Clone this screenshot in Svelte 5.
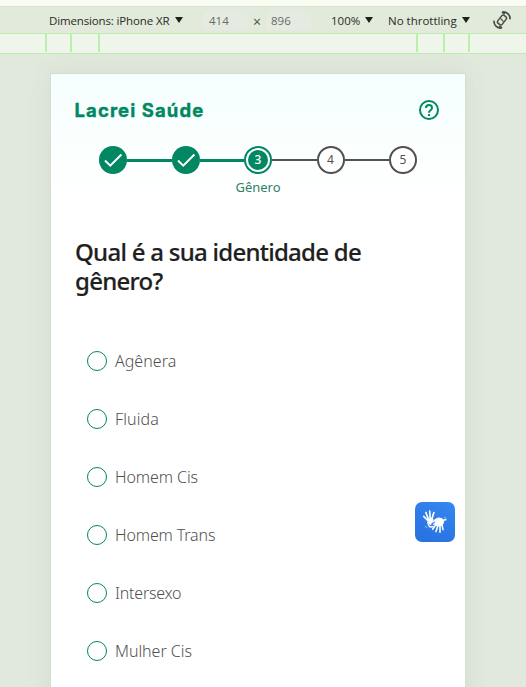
<script>
  const options = [
    { label: 'Agênera', spacing: 0.03 },
    { label: 'Fluida', spacing: 0.1 },
    { label: 'Homem Cis', spacing: -0.1 },
    { label: 'Homem Trans', spacing: -0.15 },
    { label: 'Intersexo', spacing: -0.22 },
    { label: 'Mulher Cis', spacing: -0.04 }
  ];
  const steps = [1, 2, 3, 4, 5];
  const current = 3;
  let selected = $state('');
</script>

<div class="screen">
  <div class="strip"></div>
  <header class="toolbar">
    <span class="device">Dimensions: iPhone XR</span><i class="caret"></i>
    <span class="size first">414</span><span class="times">×</span><span class="size second">896</span>
    <span class="zoom">100%</span><i class="caret"></i>
    <span class="throttle">No throttling</span><i class="caret"></i>
    <svg class="rotate" width="20" height="20" viewBox="0 0 20 20" fill="none" stroke="#494e47" stroke-width="1.7">
      <rect x="7.2" y="5" width="5.6" height="10" rx="2" stroke-width="1.5" transform="rotate(38 10 10)" />
      <path d="M8.5 8.4l3 3.2" stroke-width="1.2" />
      <path d="M10.5 1.9C14.8 1.6 18.6 5 17.9 9.4M9.5 18.1C5.2 18.4 1.4 15 2.1 10.6" />
      <path d="M10 2l2.8 2.2M10 18l-2.8-2.2" />
    </svg>
  </header>
  <div class="ruler">
    <b class="a"></b><b class="b"></b><b class="c"></b><b class="d"></b><b class="e"></b><b class="f"></b>
  </div>
  <main class="canvas">
    <section class="phone">
      <div class="brand">
        <span class="logo">Lacrei Saúde</span>
        <svg class="help" width="20" height="20" viewBox="0 0 20 20" fill="none" stroke="#018762" stroke-width="2">
          <circle cx="10" cy="10" r="9" />
          <path d="M7 8c0-4 6-4 6 0 0 2.3-3 2.3-3 4.7M10 14v2" />
        </svg>
      </div>
      <div class="steps">
        {#each steps as step}
          {#if step > 1}<i class="line" class:complete={step <= current}></i>{/if}
          <div class="step" class:done={step < current} class:active={step === current}>
            {#if step < current}
              <svg width="28" height="28" viewBox="0 0 28 28" fill="none" stroke="#fff" stroke-width="2">
                <path d="M6 14.5l5.3 5.2L22.4 8.5" />
              </svg>
            {:else}
              <span>{step}</span>
            {/if}
          </div>
        {/each}
      </div>
      <div class="caption">Gênero</div>
      <h1>Qual é a sua identidade de gênero?</h1>
      <div class="options">
        {#each options as { label, spacing }}
          <label>
            <input type="radio" name="genero" value={label} bind:group={selected} />
            <span style="letter-spacing: {spacing}px">{label}</span>
          </label>
        {/each}
      </div>
      <button class="libras" aria-label="Libras">
        <svg width="40" height="40" viewBox="0 0 40 40" fill="none" stroke="#fff" stroke-linecap="round" stroke-linejoin="round">
          <path d="M12.8 18l4.2-1.4 1.4 1.2-2.2 2.4-.4 2.6-1.8-1.4z" fill="#fff" stroke-width="1" />
          <path d="M12.8 18.5l-4.1-4.2M13.5 17.5l-2.6-7M15.2 17l-.5-7.8M16.8 17l2.1-6.4" stroke-width="1.7" />
          <path d="M13 20.5c.2 3.6 2 5.2 5 4" stroke-width="1.5" />
          <path d="M20.4 17.3l3-1.4 3.7.7 1.6 2.3-.8 3.4-3 1.8-3.7-.4-.8-2z" fill="#fff" stroke-width="1" />
          <path d="M21 22.5l-3.4 4.7M23 23.3l-2 6.3M25 23.3v6.9M26.8 21.8l1.2 5.9M28 18.2l2.8-.4" stroke-width="1.6" />
          <path d="M16.6 20.6l4.4-3.1M18.6 22.4l2.6-1.6" stroke-width="1.3" />
          <path d="M10.3 24.5l1.7 1.1M29.5 15.4l1.5.8" stroke-width=".8" opacity=".7" />
        </svg>
      </button>
    </section>
  </main>
</div>

<style>
  :global(body) { margin: 0; overflow: hidden; }
  * { box-sizing: border-box; }
  .screen { width: 526px; height: 687px; overflow: hidden; display: flex; flex-direction: column; background: #e1e9dc; }
  .strip { height: 6px; flex: none; background: #f8fcf2; }
  .toolbar {
    height: 27px; flex: none; display: flex; align-items: center; padding: 2px 0 0 49px;
    background: #e2eadb; border-top: 1px solid #dae2d4;
    font: 11.5px/16px "Open Sans", sans-serif; color: #272c26; white-space: nowrap;
  }
  .device { width: 122px; letter-spacing: -0.14px; }
  .zoom { width: 29px; margin-left: 20px; }
  .throttle { width: 69px; margin-left: 15px; }
  .caret { width: 8px; height: 6px; margin: -2px 0 0 4px; background: #1d211c; clip-path: polygon(0 0, 100% 0, 50% 100%); }
  .zoom + .caret, .throttle + .caret { margin-left: 5px; }
  .size { width: 45px; height: 18px; line-height: 18px; padding-left: 6px; border-radius: 4px; background: #e6ebe2; color: #676b66; }
  .first { margin-left: 20px; }
  .second { padding-left: 5px; }
  .times { width: 18px; text-align: center; padding-top: 1px; font-size: 14px; color: #4a4e48; }
  .rotate { margin: -2px 0 0 22px; flex: none; }
  .ruler { height: 21px; flex: none; display: flex; background: #f0f5eb; border-top: 1px solid #b9efaa; border-bottom: 1px solid #b9efaa; }
  .ruler b { width: 2px; height: 18px; background: #b9f0aa; }
  .a { margin-left: 45px; }
  .b { margin-left: 23px; }
  .c { margin-left: 26px; }
  .d { margin-left: 316px; }
  .e { margin-left: 25px; }
  .f { margin-left: 23px; }
  .canvas { flex: 1; padding: 19px 0 0 50px; }
  .phone {
    position: relative; width: 416px; height: 640px; padding: 0 24px; border: 1px solid #d5ded2;
    background: linear-gradient(#f4fffd, #fff 122px); box-shadow: 0 0 24px rgba(70, 90, 65, .08);
    font-family: "Noto Sans", sans-serif;
  }
  .brand { height: 72px; display: flex; align-items: center; justify-content: space-between; padding: 0 2px 0 0; }
  .logo { margin-left: -.5px; font: 700 18.5px/24px Inter, "Noto Sans", sans-serif; color: #018762; letter-spacing: 1.1px; -webkit-text-stroke: .4px #018762; }
  .steps { display: flex; align-items: center; height: 28px; padding: 0 24px; }
  .step {
    width: 28px; height: 28px; flex: none; display: flex; align-items: center; justify-content: center;
    border: 2px solid #515151; border-radius: 50%; background: #fff; color: #515151; font-size: 12px; line-height: 20px;
  }
  .done { border: 0; background: #018762; }
  .active { border-color: #018762; }
  .active span { width: 20px; height: 20px; border-radius: 50%; text-align: center; background: #018762; color: #fff; font-weight: 500; }
  .line { flex: 1; height: 2px; background: #515151; }
  .complete { height: 3px; background: #018762; }
  .caption { margin-top: 3px; text-align: center; font-size: 13px; line-height: 20px; color: #2f8067; }
  h1 { width: 300px; margin: 40px 0 0; font: 500 24px/29px "Noto Sans", sans-serif; letter-spacing: -.73px; color: #1f1f1f; -webkit-text-stroke: .2px #1f1f1f; }
  .options { margin-top: 37px; padding-left: 12px; }
  label { height: 58px; display: flex; align-items: center; font: 300 16px/24px "Noto Sans", sans-serif; color: #515151; }
  label span { margin-top: -1px; }
  input { appearance: none; width: 20px; height: 20px; margin: 0 8px 0 0; border: 1.5px solid #018762; border-radius: 50%; background: #fff; }
  .libras { position: absolute; right: 10px; top: 428px; width: 40px; height: 40px; padding: 0; border: 0; border-radius: 7px; background: linear-gradient(25deg, #276fdf, #3487f1); }
  .libras svg, .step svg { display: block; }
</style>
